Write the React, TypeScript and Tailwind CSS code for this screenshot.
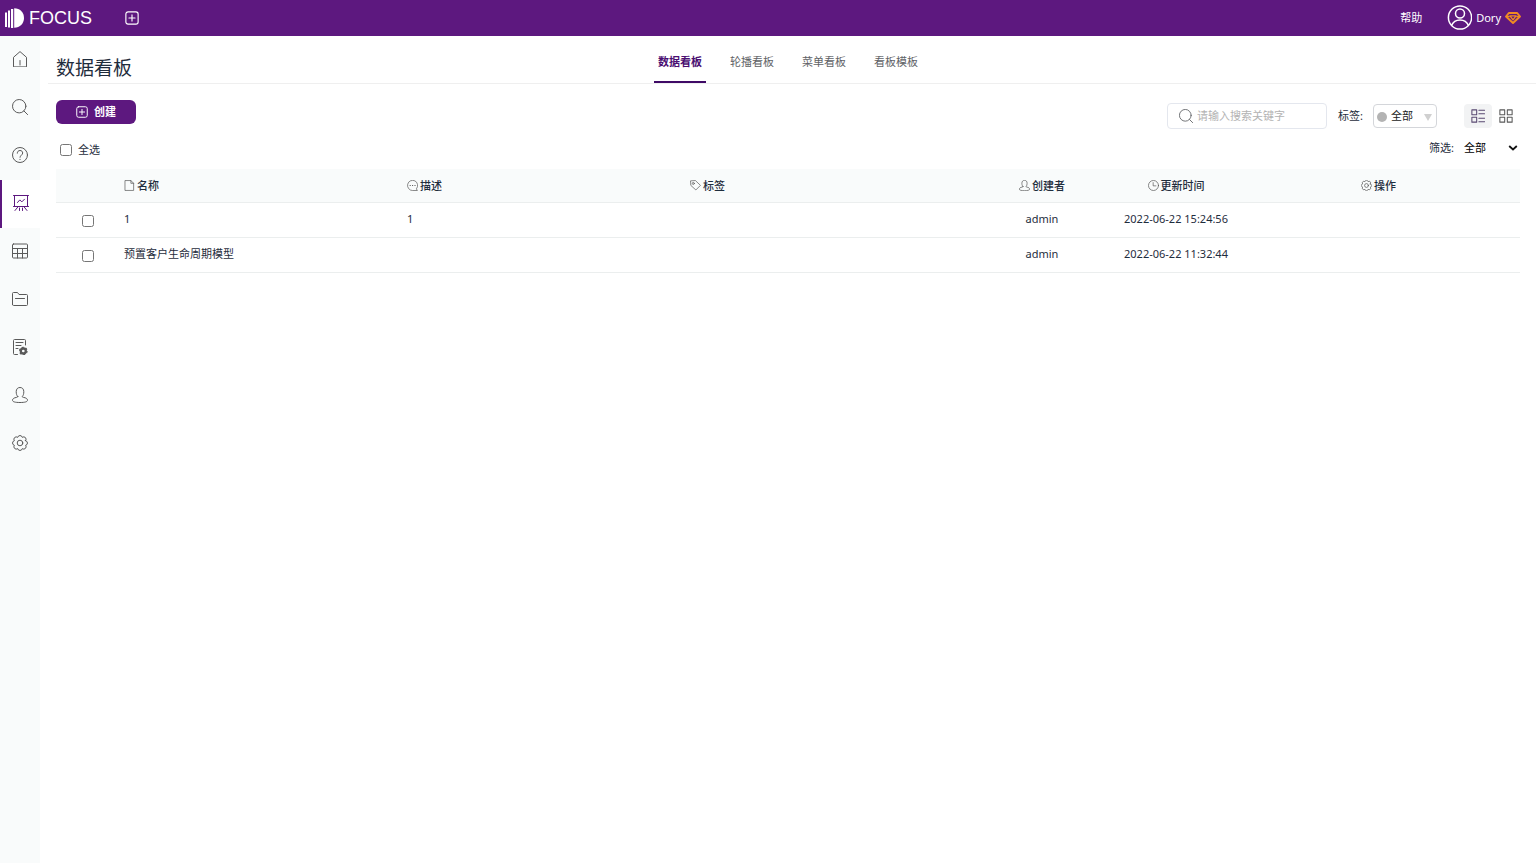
import { useState } from "react";
import clsx from "clsx";

interface IconProps {
  className?: string;
}

function Icon({
  className = "size-4",
  width = 1,
  children,
}: IconProps & { width?: number; children: React.ReactNode }) {
  return (
    <svg
      viewBox="0 0 16 16"
      className={clsx("shrink-0", className)}
      fill="none"
      stroke="currentColor"
      strokeWidth={width}
      strokeLinecap="round"
      strokeLinejoin="round"
      aria-hidden="true"
    >
      {children}
    </svg>
  );
}

const HomeIcon = () => (
  <Icon>
    <path d="M1.5 15.5V6.3L8 .6l6.500 5.700v9.200zM8 9.500v4.500" />
  </Icon>
);

const SearchIcon = ({ className }: IconProps) => (
  <Icon className={className}>
    <circle cx="7.200" cy="7.200" r="6.700" />
    <path d="M12 12l3.600 3.600" />
  </Icon>
);

const HelpIcon = () => (
  <Icon>
    <circle cx="8" cy="8" r="7.500" />
    <path d="M5.300 6.200C5.300 4.500 6.400 3.500 8 3.500s2.700 1 2.700 2.500C10.700 8 8 8.200 8 10.300M8 12.300v.3" />
  </Icon>
);

const BoardIcon = () => (
  <Icon>
    <path d="M.5.5h15M1.500.5v10.500M14.500.5v10.500M.5 11.500h15M4.500 7.500l2.300-2.600 2 2 2.700-2.700M5 11.800l-3 3.700M11 11.800l3 3.700M6.500 13v2.500M9.500 13v2.500" />
  </Icon>
);

const TableIcon = () => (
  <Icon>
    <rect x=".5" y="1" width="15" height="14" rx="1" />
    <path d="M.5 5.500h15M.5 10.500h15M5.500 5.500V15M10.500 5.500V15" />
  </Icon>
);

const FolderIcon = () => (
  <Icon>
    <path d="M.5 13.500v-11a1 1 0 0 1 1-1h4l1.500 2h7.500a1 1 0 0 1 1 1v9a1 1 0 0 1-1 1h-13a1 1 0 0 1-1-1zM3.500 7.500h9" />
  </Icon>
);

const ReportIcon = () => (
  <Icon>
    <path d="M5.500 15.500H2.500a1 1 0 0 1-1-1V1.500a1 1 0 0 1 1-1h10a1 1 0 0 1 1 1V6M4 3.500h7M4 6.500h5M4 9.500h2" />
    <circle cx="11.300" cy="12" r="2.500" strokeWidth="2.300" />
    <circle cx="11.300" cy="12" r="3.700" strokeWidth="1.300" strokeDasharray="1.900 1.970" strokeLinecap="butt" />
  </Icon>
);

const UserIcon = ({ className }: IconProps) => (
  <Icon className={className}>
    <path d="M5.700 9.500C4.700 8.500 4.200 6.900 4.200 4.700 4.200 2 5.700.5 8 .5s3.800 1.500 3.800 4.200c0 2.200-.5 3.800-1.500 4.800 0 .7.400.8 1.200.9 2.500.4 4 1.300 4 2.800 0 1.600-2.500 2.300-7.500 2.300S.5 14.800.5 13.200c0-1.500 1.500-2.400 4-2.800.8-.1 1.200-.2 1.200-.9z" />
  </Icon>
);

const GearIcon = ({ className }: IconProps) => (
  <Icon className={className}>
    <path d="M13.600 5.700A2.350 2.350 0 0 1 13.600 10.300A2.350 2.350 0 0 1 10.300 13.600A2.350 2.350 0 0 1 5.700 13.600A2.350 2.350 0 0 1 2.400 10.300A2.350 2.350 0 0 1 2.400 5.700A2.350 2.350 0 0 1 5.700 2.400A2.350 2.350 0 0 1 10.300 2.400A2.350 2.350 0 0 1 13.600 5.700z" />
    <circle cx="8" cy="8" r="2.800" />
  </Icon>
);

const FileIcon = ({ className }: IconProps) => (
  <Icon className={className}>
    <path d="M2 .8h8l4 4v10.400H2zM10 .8v4h4" />
  </Icon>
);

const CommentIcon = ({ className }: IconProps) => (
  <Icon className={className}>
    <path d="M14 12.500A7.400 7.400 0 1 0 8 15.300h6.500z" />
    <path d="M4.500 8h.3M8 8h.3M11.500 8h.3" strokeWidth="1.600" />
  </Icon>
);

const TagIcon = ({ className }: IconProps) => (
  <Icon className={className}>
    <path d="M.8 1.800l.4 6 7.300 6.700 6.700-6.700L8.300 1.200z" />
    <circle cx="4.800" cy="5" r="1.500" />
  </Icon>
);

const ClockIcon = ({ className }: IconProps) => (
  <Icon className={className}>
    <circle cx="8" cy="8" r="7.300" />
    <path d="M7.500 3.800v4.700h4" />
  </Icon>
);

const PlusBoxIcon = ({ className }: IconProps) => (
  <Icon className={className} width={1.3}>
    <rect x="1" y="1" width="14" height="14" rx="2.500" />
    <path d="M8 4.500v7M4.500 8h7" />
  </Icon>
);

const ListViewIcon = () => (
  <Icon className="size-3.5" width={1.2}>
    <path d="M1 1h5.500v5.500H1zM1 9.500h5.500V15H1zM9 1.500h6.500M9 5.500h6.500M9 10.500h6.500M9 14.500h6.500" />
  </Icon>
);

const GridViewIcon = () => (
  <Icon className="size-3.5" width={1.2}>
    <path d="M1 1h5.500v5.500H1zM9.500 1H15v5.500H9.500zM1 9.500h5.500V15H1zM9.500 9.500H15V15H9.500z" />
  </Icon>
);

function Logo() {
  return (
    <a href="#home" className="flex items-center gap-[5px] text-white">
      <svg viewBox="0 0 19 20" className="h-5 w-[19px]" fill="currentColor" aria-hidden="true">
        <rect x="0" y="4.500" width="2" height="14.500" />
        <rect x="3" y="2.500" width="2" height="17" />
        <rect x="6" y="1" width="2.200" height="19" />
        <path d="M9.200.3C15 .3 19 4.500 19 10s-4 9.700-9.800 9.700z" />
      </svg>
      <span className="font-['Liberation_Sans',sans-serif] text-lg leading-5">FOCUS</span>
    </a>
  );
}

function TopBar() {
  return (
    <header className="flex h-9 items-center bg-[#5d187f] px-[5px] text-[11px] text-white">
      <Logo />
      <button type="button" aria-label="新建" className="ml-[33px]">
        <PlusBoxIcon className="size-3.5" />
      </button>
      <a href="#help" className="ml-auto">
        帮助
      </a>
      <a href="#profile" className="mr-2.5 ml-6 flex items-center gap-1">
        <svg
          viewBox="0 0 26 26"
          className="size-[26px]"
          fill="none"
          stroke="currentColor"
          strokeWidth="1.500"
          aria-hidden="true"
        >
          <circle cx="14" cy="12.500" r="11.600" />
          <circle cx="14" cy="8.500" r="4.500" />
          <path d="M5.500 20.500c1.500-3.700 4.800-5.600 8.500-5.600s7 1.900 8.500 5.600" />
        </svg>
        <span>Dory</span>
        <svg
          viewBox="0 0 16 12"
          className="h-3 w-4"
          fill="none"
          stroke="#f08c22"
          strokeWidth="1.900"
          strokeLinejoin="round"
          aria-hidden="true"
        >
          <path d="M3.800 1h8.400L15 4.500 8 11 1 4.500z" />
          <path d="M5 3.900h6L8 7.800zM1 4.500h3.500M11.500 4.500H15" strokeWidth="1.300" />
        </svg>
      </a>
    </header>
  );
}

const navItems = [
  { id: "home", label: "首页", icon: <HomeIcon /> },
  { id: "search", label: "搜索", icon: <SearchIcon /> },
  { id: "help", label: "问答", icon: <HelpIcon /> },
  { id: "board", label: "数据看板", icon: <BoardIcon /> },
  { id: "table", label: "数据表", icon: <TableIcon /> },
  { id: "folder", label: "资源", icon: <FolderIcon /> },
  { id: "report", label: "报表", icon: <ReportIcon /> },
  { id: "user", label: "用户", icon: <UserIcon /> },
  { id: "settings", label: "设置", icon: <GearIcon /> },
];

function Sidebar() {
  return (
    <nav className="flex w-10 shrink-0 flex-col bg-[#f9fbfb]">
      {navItems.map((item) => (
        <a
          key={item.id}
          href={`#${item.id}`}
          aria-label={item.label}
          className={clsx(
            "flex h-12 items-center justify-center pb-0.5",
            item.id === "board"
              ? "border-l-2 border-[#5d187f] bg-white text-[#5d187f]"
              : "text-[#5a5a5a]"
          )}
        >
          {item.icon}
        </a>
      ))}
    </nav>
  );
}

const tabs = ["数据看板", "轮播看板", "菜单看板", "看板模板"];

function PageHeader() {
  const [active, setActive] = useState(tabs[0]);

  return (
    <div className="ml-2 grid h-12 grid-cols-[1fr_auto_1fr] border-b border-[#efefef] pr-2">
      <h1 className="self-end pl-2 text-[19px] leading-[30px] text-[#1f2d3d]">数据看板</h1>
      <div className="flex gap-5">
        {tabs.map((tab) => (
          <button
            key={tab}
            type="button"
            onClick={() => setActive(tab)}
            className={clsx(
              "w-[52px] border-b-2 pt-1.5",
              tab === active
                ? "border-[#3f0a66] font-bold text-[#4b0f72]"
                : "border-transparent text-[#606266]"
            )}
          >
            {tab}
          </button>
        ))}
      </div>
    </div>
  );
}

function Toolbar() {
  return (
    <div className="flex items-start justify-between pt-4">
      <button
        type="button"
        className="flex h-6 w-20 items-center justify-center gap-1.5 rounded-md bg-[#5d187f] font-bold text-white"
      >
        <PlusBoxIcon className="size-3" />
        创建
      </button>
      <div className="flex items-center pt-[3px]">
        <label className="flex h-[26px] w-40 items-center gap-1 rounded border border-[#e4e7ee] pl-[11px] text-[#606266]">
          <SearchIcon className="size-3.5" />
          <input
            type="text"
            placeholder="请输入搜索关键字"
            aria-label="搜索"
            className="w-full min-w-0 text-[11px] outline-none placeholder:text-[#b3b3b3]"
          />
        </label>
        <label htmlFor="tag" className="mr-2.5 ml-[11px]">
          标签:
        </label>
        <div className="relative">
          <select
            id="tag"
            className="h-6 w-16 appearance-none rounded border border-[#d4d6da] pl-[17px] text-[11px] text-[#222]"
          >
            <option>全部</option>
          </select>
          <span className="pointer-events-none absolute top-2 left-1 size-2.5 rounded-full bg-[#b3b3b3]" />
          <svg
            viewBox="0 0 8 7"
            className="pointer-events-none absolute top-2.5 right-[5px] h-[7px] w-2"
            fill="#d0d0d0"
            aria-hidden="true"
          >
            <path d="M0 0h8L4 7z" />
          </svg>
        </div>
        <button
          type="button"
          aria-label="列表"
          className="ml-[27px] flex h-6 w-7 items-center justify-center rounded bg-[#f2f3f4] text-[#5a4a72]"
        >
          <ListViewIcon />
        </button>
        <button
          type="button"
          aria-label="卡片"
          className="flex h-6 w-7 items-center justify-center text-[#5a5a5a]"
        >
          <GridViewIcon />
        </button>
      </div>
    </div>
  );
}

function FilterRow() {
  return (
    <div className="flex h-10 items-center justify-between">
      <label className="flex items-center gap-1.5 pt-px pl-1">
        <input type="checkbox" className="size-3" />
        全选
      </label>
      <div className="flex items-center pb-0.5">
        <label htmlFor="filter" className="mr-2.5">
          筛选:
        </label>
        <div className="relative">
          <select id="filter" className="w-14 appearance-none text-[11px] text-black">
            <option>全部</option>
          </select>
          <svg
            viewBox="0 0 10 6"
            className="pointer-events-none absolute top-[5px] right-0.5 h-1.5 w-2.5"
            fill="none"
            stroke="#111"
            strokeWidth="1.800"
            aria-hidden="true"
          >
            <path d="M1.200 1L5 4.500 8.800 1" />
          </svg>
        </div>
      </div>
    </div>
  );
}

const columns = [
  { title: "名称", icon: <FileIcon className="size-[11px]" />, width: "" },
  { title: "描述", icon: <CommentIcon className="size-[11px]" />, width: "" },
  { title: "标签", icon: <TagIcon className="size-[11px]" />, width: "" },
  { title: "创建者", icon: <UserIcon className="size-[11px]" />, width: "w-[146px]", center: true },
  { title: "更新时间", icon: <ClockIcon className="size-[11px]" />, width: "w-[122px]", center: true },
  { title: "操作", icon: <GearIcon className="size-[11px]" />, width: "", center: true },
];

const rows = [
  { name: "1", desc: "1", creator: "admin", updated: "2022-06-22 15:24:56" },
  { name: "预置客户生命周期模型", desc: "", creator: "admin", updated: "2022-06-22 11:32:44" },
];

function BoardTable() {
  return (
    <table className="w-full table-fixed border-separate border-spacing-0">
      <thead>
        <tr className="h-[34px] bg-[#f9fbfb]">
          <th className="w-16 border-b border-[#ebeeee]" />
          {columns.map((col) => (
            <th
              key={col.title}
              className={clsx("border-b border-[#ebeeee] px-1 font-medium", col.width)}
            >
              <span className={clsx("flex items-center gap-0.5", col.center && "justify-center")}>
                <span className="text-[#555]">{col.icon}</span>
                {col.title}
              </span>
            </th>
          ))}
        </tr>
      </thead>
      <tbody>
        {rows.map((row) => (
          <tr key={row.name} className="h-[35px]">
            <td className="border-b border-[#ebeeee] pt-0.5 text-center">
              <input
                type="checkbox"
                aria-label={`选择 ${row.name}`}
                className="mx-auto block size-3"
              />
            </td>
            <td className="border-b border-[#ebeeee] px-1 pb-0.5">{row.name}</td>
            <td className="border-b border-[#ebeeee] px-1 pb-0.5">{row.desc}</td>
            <td className="border-b border-[#ebeeee] px-1 pb-0.5" />
            <td className="border-b border-[#ebeeee] px-1 pb-0.5 text-center">{row.creator}</td>
            <td className="border-b border-[#ebeeee] px-1 pb-0.5 text-center whitespace-nowrap">
              {row.updated}
            </td>
            <td className="border-b border-[#ebeeee] px-1 pb-0.5" />
          </tr>
        ))}
      </tbody>
    </table>
  );
}

export default function App() {
  return (
    <div className="flex min-h-screen flex-col bg-white font-['Noto_Sans','Noto_Sans_CJK_SC',sans-serif] text-[11px] leading-4 text-[#1f2d3d]">
      <TopBar />
      <div className="flex grow">
        <Sidebar />
        <main className="min-w-0 grow">
          <PageHeader />
          <div className="px-4">
            <Toolbar />
            <FilterRow />
            <BoardTable />
          </div>
        </main>
      </div>
    </div>
  );
}
